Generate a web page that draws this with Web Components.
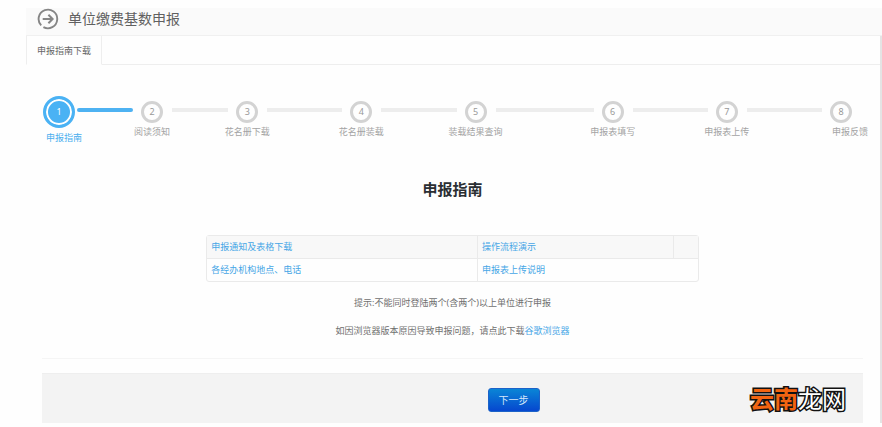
<!DOCTYPE html>
<html lang="zh-CN">
<head>
<meta charset="utf-8">
<meta name="viewport" content="width=device-width, initial-scale=1">
<title>单位缴费基数申报</title>
<style>
  body {
    margin: 0;
    background: #fefefe;
    color: #707070;
    font: 9px/14px "Noto Sans", "Noto Sans CJK SC", sans-serif;
  }
</style>
</head>
<body>
<declare-page>
  <page-title slot="header">单位缴费基数申报</page-title>
  <tab-bar slot="tabs">申报指南下载</tab-bar>
  <step-track>
    <step-item n="1" style="--grow:56" active edge>申报指南</step-item>
    <step-item n="2" style="--grow:56">阅读须知</step-item>
    <step-item n="3" style="--grow:75">花名册下载</step-item>
    <step-item n="4" style="--grow:75">花名册装载</step-item>
    <step-item n="5" style="--grow:98">装载结果查询</step-item>
    <step-item n="6" style="--grow:75">申报表填写</step-item>
    <step-item n="7" style="--grow:75">申报表上传</step-item>
    <step-item n="8" last edge>申报反馈</step-item>
  </step-track>
  <guide-panel></guide-panel>
  <action-bar>下一步</action-bar>
  <site-mark slot="mark"><span slot="accent">云南</span>龙网</site-mark>
</declare-page>

<script>
const define = (name, html, setup) => {
  const template = document.createElement('template');
  template.innerHTML = html;
  customElements.define(name, class extends HTMLElement {
    constructor() {
      super();
      this.attachShadow({ mode: 'open' }).append(template.content.cloneNode(true));
    }
    connectedCallback() { if (setup) setup(this, this.shadowRoot); }
  });
};

define('declare-page', `
  <style>
    :host { display: block; position: relative; padding: 8px 0 4px 26px; }
    .body { border-right: 2px solid #e4e4e4; }
    main { display: block; padding: 31px 17px 0 16px; }
  </style>
  <slot name="header"></slot>
  <div class="body">
    <slot name="tabs"></slot>
    <main><slot></slot></main>
  </div>
  <slot name="mark"></slot>`);

define('page-title', `
  <style>
    :host { display: block; background: #fafafa; border-bottom: 1px solid #f0f0f0; }
    header { display: flex; align-items: center; gap: 9px; padding: 0 11px 5px; }
    svg { width: 22px; height: 22px; flex: none; }
    h1 { margin: 0; font-size: 14px; line-height: 22px; font-weight: 400; color: #606060; }
  </style>
  <header>
    <svg viewBox="0 0 22 22" fill="none" stroke="#858585" aria-hidden="true">
      <path d="M4.2 17.4A9.3 9.3 0 1 1 6.4 19.1" stroke-width="1.9"/>
      <path d="M5.7 11h9.6M11.4 6.8l4.2 4.2-4.2 4.2" stroke-width="2"/>
    </svg>
    <h1><slot></slot></h1>
  </header>`);

define('tab-bar', `
  <style>
    :host { display: block; }
    nav { display: flex; }
    button {
      font: inherit; color: #666; background: #fefefe; margin: 0; padding: 8px 10px 6px;
      border: 1px solid #eee; border-width: 0 1px 1px; border-bottom-color: transparent;
    }
    i { flex: 1; border-bottom: 1px solid #eee; }
  </style>
  <nav><button type="button"><slot></slot></button><i></i></nav>`);

define('step-track', `
  <style>
    :host { display: block; padding: 0 11px 0 1px; }
    div { display: flex; align-items: flex-start; }
  </style>
  <div role="list"><slot></slot></div>`);

define('step-item', `
  <style>
    :host { display: flex; flex: var(--grow) 1 auto; align-items: flex-start; color: #a3a3a3; }
    :host([last]) { flex: none; }
    .node {
      display: flex; flex-direction: column; align-items: center; flex: none;
      width: 22px; padding-top: 5px; gap: 2px;
    }
    .ring {
      box-sizing: border-box; width: 22px; height: 22px; border: 3px solid #d3d3d3; border-radius: 50%;
      display: grid; place-items: center; flex: none; line-height: 16px; color: #999;
    }
    .label { white-space: nowrap; }
    .bar { flex: 1; height: 4px; margin: 12px 8px 0 9px; background: #ededed; }
    :host([last]) .bar { display: none; }
    :host([edge]) .label { align-self: flex-start; padding-left: 3px; }
    :host([active]) { color: #4aaeee; }
    :host([active]) .node { width: 32px; padding-top: 0; gap: 3px; }
    :host([active]) .ring {
      width: 32px; height: 32px; border: 3px solid #4ab2f4; background: #4ab2f4;
      box-shadow: inset 0 0 0 2px #fff; color: #fff;
    }
    :host([active]) .bar { background: #4eb2f2; margin-left: 2px; border-radius: 2px; }
    :host([last]) .label { padding-left: 2px; }
  </style>
  <div class="node"><span class="ring"></span><span class="label"><slot></slot></span></div>
  <span class="bar"></span>`,
  (host, root) => {
    host.setAttribute('role', 'listitem');
    root.querySelector('.ring').textContent = host.getAttribute('n');
  });

define('guide-panel', `
  <style>
    :host { display: block; text-align: center; padding-top: 32px; }
    h2 { margin: 0 0 34px; font-size: 15px; line-height: 24px; color: #2b2f33; }
    a { color: #46a6e6; text-decoration: none; }
    table {
      width: 60%; margin: 0 auto 14px; table-layout: fixed; text-align: left;
      border-collapse: separate; border-spacing: 0; border: 1px solid #eaeaea; border-radius: 3px;
    }
    col:nth-child(1) { width: 55%; }
    col:nth-child(2) { width: 40%; }
    td { padding: 4px; line-height: 14px; }
    td + td { border-left: 1px solid #eaeaea; }
    tr:first-child td { background: #f8f8f8; border-bottom: 1px solid #eaeaea; }
    p { margin: 0 0 14px; }
    hr { margin: 20px 0 14px; border: 0; border-top: 1px solid #f5f5f5; }
  </style>
  <h2>申报指南</h2>
  <table>
    <colgroup><col><col><col></colgroup>
    <tbody>
      <tr><td><a href="#notice">申报通知及表格下载</a></td><td><a href="#demo">操作流程演示</a></td><td></td></tr>
      <tr><td><a href="#offices">各经办机构地点、电话</a></td><td colspan="2"><a href="#upload">申报表上传说明</a></td></tr>
    </tbody>
  </table>
  <p>提示:不能同时登陆两个(含两个)以上单位进行申报</p>
  <p>如因浏览器版本原因导致申报问题，请点此下载<a href="#browser">谷歌浏览器</a></p>
  <hr>`);

define('action-bar', `
  <style>
    :host { display: block; }
    footer {
      display: flex; justify-content: center; padding: 14px 0 11px 122px;
      background: #f3f3f3; border-top: 1px solid #eee;
    }
    button {
      margin: 0; padding: 4px 10px; border: 1px solid #1c62c8; border-radius: 3px;
      font: inherit; font-size: 10px; color: #d5e8fb; background: linear-gradient(#0a85d6, #0647cf);
    }
  </style>
  <footer><button type="button"><slot></slot></button></footer>`);

define('site-mark', `
  <style>
    :host {
      display: block; position: absolute; right: 36px; bottom: 12px;
      font: 700 24px/34px "Noto Sans CJK SC", sans-serif; color: #fff;
      -webkit-text-stroke: 3px #111; paint-order: stroke fill; white-space: nowrap;
    }
    .rest { font-weight: 400; }
    .accent { color: #f26411; }
  </style>
  <span class="accent"><slot name="accent"></slot></span><span class="rest"><slot></slot></span>`);
</script>
</body>
</html>
